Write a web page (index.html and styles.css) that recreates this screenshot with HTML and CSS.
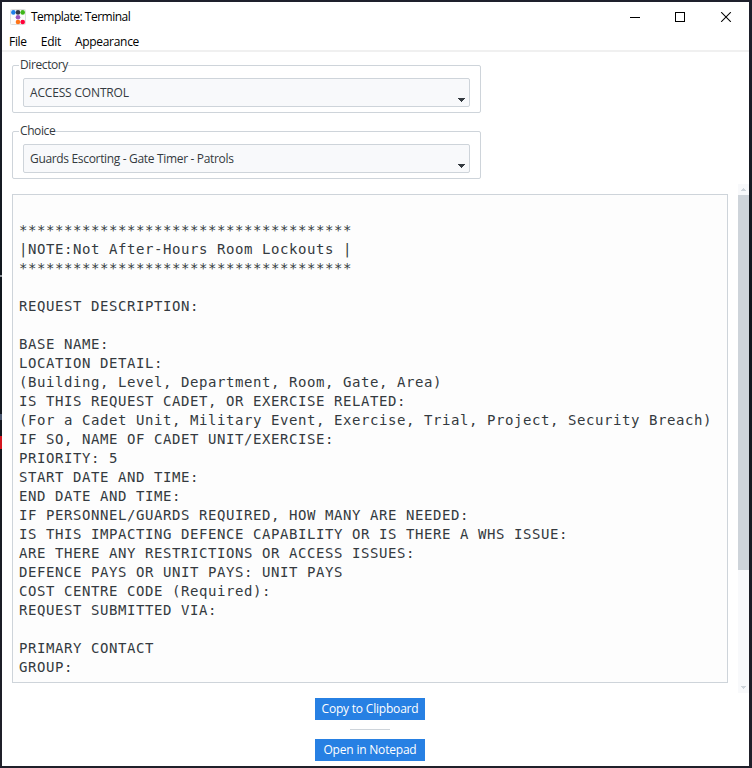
FILE: index.html
```
<!DOCTYPE html>
<html lang="en">
<head>
<meta charset="utf-8">
<title>Template: Terminal</title>
<link rel="stylesheet" href="styles.css">
</head>
<body>
<div class="window">
  <header class="titlebar">
    <svg class="logo" width="16" height="16" viewBox="0 0 16 16">
      <rect x=".5" y=".5" width="15" height="15" rx="1" fill="#fcfcfc" stroke="#dedede"/>
      <circle cx="3.4" cy="3.4" r="2.3" fill="#1d7fe8"/>
      <circle cx="8" cy="3.4" r="2.3" fill="#343a46"/>
      <circle cx="12.7" cy="3.4" r="2.3" fill="#3fb618"/>
      <circle cx="8" cy="8.2" r="2.3" fill="#9954bb"/>
      <circle cx="8" cy="13" r="2.3" fill="#ff7518"/>
      <circle cx="12.7" cy="13" r="2.3" fill="#ff0039"/>
    </svg>
    <span class="title">Template: Terminal</span>
    <svg class="controls" width="102" height="10" viewBox="0 0 102 10" fill="none" stroke="#000">
      <path d="M0 5.5H10M45.5 .5H54.5V9.5H45.5Z" shape-rendering="crispEdges"/>
      <path d="M91.2 .2L100.8 9.8M100.8 .2L91.2 9.8" stroke-width="1.1"/>
    </svg>
  </header>
  <nav class="menu">
    <span>File</span><span>Edit</span><span>Appearance</span>
  </nav>
  <main>
    <section class="group">
      <h2>Directory</h2>
      <div class="combo"><span class="access">ACCESS CONTROL</span>
        <svg class="arrow" width="8" height="4" shape-rendering="crispEdges"><path d="M0 0H7V1H6V2H5V3H4V4H3V3H2V2H1V1H0Z" fill="#343a40"/></svg>
      </div>
    </section>
    <section class="group">
      <h2>Choice</h2>
      <div class="combo"><span class="guards">Guards Escorting - Gate Timer - Patrols</span>
        <svg class="arrow" width="8" height="4" shape-rendering="crispEdges"><path d="M0 0H7V1H6V2H5V3H4V4H3V3H2V2H1V1H0Z" fill="#343a40"/></svg>
      </div>
    </section>
    <div class="editor">
<pre class="text">

*************************************
|NOTE:Not After-Hours Room Lockouts |
*************************************

REQUEST DESCRIPTION:

BASE NAME:
LOCATION DETAIL:
(Building, Level, Department, Room, Gate, Area)
IS THIS REQUEST CADET, OR EXERCISE RELATED:
(For a Cadet Unit, Military Event, Exercise, Trial, Project, Security Breach)
IF SO, NAME OF CADET UNIT/EXERCISE:
PRIORITY: 5
START DATE AND TIME:
END DATE AND TIME:
IF PERSONNEL/GUARDS REQUIRED, HOW MANY ARE NEEDED:
IS THIS IMPACTING DEFENCE CAPABILITY OR IS THERE A WHS ISSUE:
ARE THERE ANY RESTRICTIONS OR ACCESS ISSUES:
DEFENCE PAYS OR UNIT PAYS: UNIT PAYS
COST CENTRE CODE (Required):
REQUEST SUBMITTED VIA:

PRIMARY CONTACT
GROUP:</pre>
      <div class="scrollbar">
        <svg width="11" height="11" shape-rendering="crispEdges"><path d="M5 4H6V5H7V6H8V7H3V6H4V5H5Z" fill="#ced4da"/></svg>
        <div class="thumb"></div>
        <svg class="down" width="11" height="11" shape-rendering="crispEdges"><path d="M3 4H8V5H7V6H6V7H5V6H4V5H3Z" fill="#ced4da"/></svg>
      </div>
    </div>
    <div class="actions">
      <button>Copy to Clipboard</button>
      <div class="rule"></div>
      <button>Open in Notepad</button>
    </div>
  </main>
</div>
<div class="backdrop-edge"></div>
</body>
</html>
```
FILE: styles.css
```
* { box-sizing: border-box; }
body { margin: 0; background: #fff; color: #343a40; font: 12px/16px "Open Sans", "Noto Sans", sans-serif; }
.window {
  width: 752px; height: 768px; overflow: hidden;
  border: 2px solid #1e1f29; border-right-width: 3px;
  border-image: linear-gradient(#1e202c, #10171d 40%, #20202a) 2 3 2 2;
  white-space: nowrap;
}
/* Slivers of the desktop behind the window, along its left edge */
.backdrop-edge {
  position: absolute; left: 0; top: 275px; width: 2px; height: 175px;
  background: linear-gradient(#8d9298 2px, transparent 2px 139px, #4b5870 139px 145px, transparent 145px 161px, #d3161f 161px 174px, transparent 174px);
}
svg { display: block; flex: none; }
.titlebar { height: 29px; display: flex; align-items: center; padding: 0 17px 0 8px; color: #000; }
.title { margin-left: 5px; letter-spacing: -.5px; }
.controls { margin-left: auto; }
.menu { height: 21px; display: flex; gap: 14px; padding: 3px 7px 0; color: #000; border-bottom: 2px solid #f0f0f0; letter-spacing: -.3px; }
main { padding: 13px 0 0 10px; }
.group { width: 469px; height: 48px; margin-bottom: 18px; padding: 12px 10px 0; border: 1px solid #ced4da; border-radius: 2px; }
.group h2 { width: fit-content; height: 16px; margin: -21px 0 5px -4px; padding: 0 0 0 1px; background: #fff; font: inherit; letter-spacing: -.4px; }
.combo { width: 447px; height: 29px; display: flex; align-items: center; padding: 0 3px 0 6px; background: #f8f9fb; border: 1px solid #ced4da; border-radius: 2px; letter-spacing: -.3px; }
.access { letter-spacing: -.17px; }
.guards { letter-spacing: -.33px; }
.arrow { margin: 14px 0 0 auto; }
.editor { display: flex; align-items: flex-start; height: 509px; margin-top: -13px; }
.text { width: 716px; height: 489px; margin: 10px 10px 0 0; padding: 7px 6px 0; overflow: hidden; background: #fdfdfd; border: 1px solid #ced4da; font: 14px/19px "DejaVu Sans Mono", monospace; letter-spacing: .571px; }
.scrollbar { width: 11px; height: 509px; display: flex; flex-direction: column; background: #f8f9fb; }
.thumb { width: 11px; height: 375px; background: #ced4da; }
.down { margin-top: auto; }
.actions { width: 110px; display: flex; flex-direction: column; align-items: center; margin: 5px 0 0 303px; }
.actions button { width: 110px; height: 22px; padding: 0; border: 0; background: #2780e3; color: #fff; font: inherit; letter-spacing: -.2px; }
.rule { width: 40px; height: 1px; margin: 9px 0; background: #ced4da; }
```
